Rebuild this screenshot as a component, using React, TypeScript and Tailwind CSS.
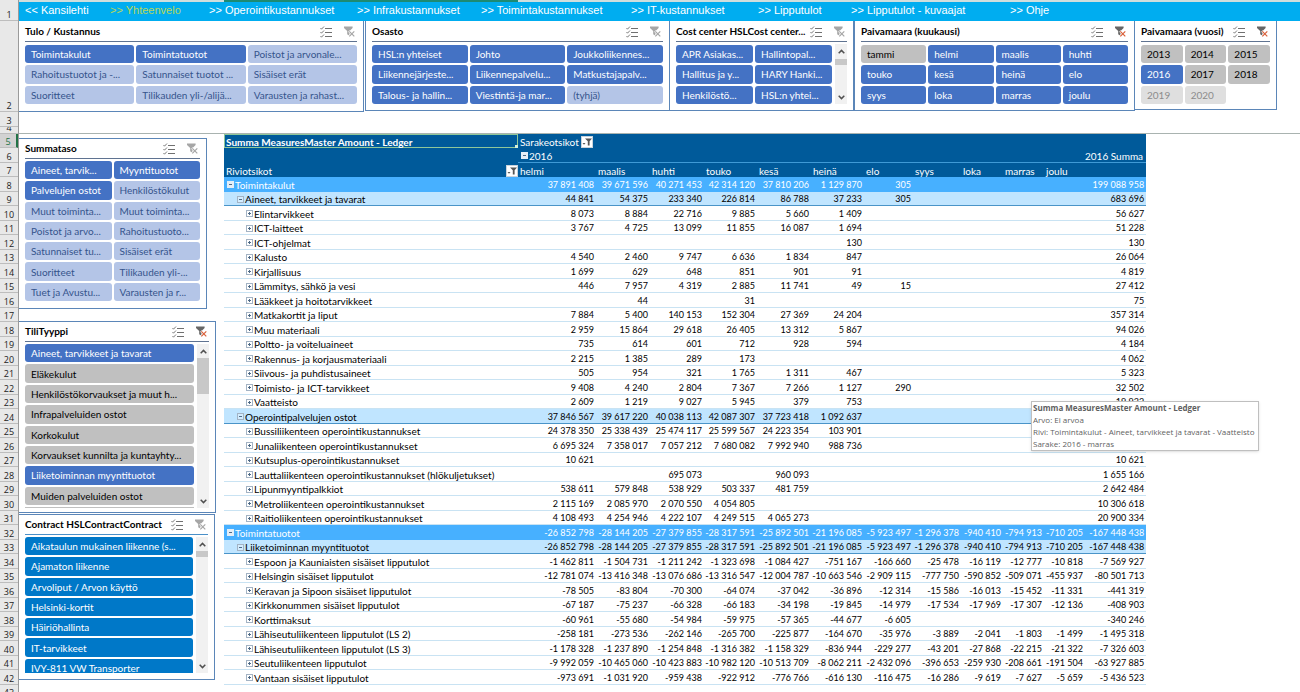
import React from "react";
import clsx from "clsx";

type Tone = "on" | "off" | "gray" | "faded" | "sky";
type Item = { label: string; tone: Tone };

const tones: Record<Tone, string> = {
  on: "bg-[#4472c4] text-white",
  off: "bg-[#b4c5e7] text-[#35548c]",
  gray: "bg-[#c0c0c0] text-black",
  faded: "bg-[#dfdfdf] text-[#8c8c8c]",
  sky: "bg-[#0078c8] text-white",
};

const make = (tone: Tone, ...labels: string[]): Item[] =>
  labels.map((label) => ({ label, tone }));

const links = [
  "<< Kansilehti",
  ">> Yhteenvelo",
  ">> Operointikustannukset",
  ">> Infrakustannukset",
  ">> Toimintakustannukset",
  ">> IT-kustannukset",
  ">> Lipputulot",
  ">> Lipputulot - kuvaajat",
  ">> Ohje",
];

const tulo = [
  ...make("on", "Toimintakulut", "Toimintatuotot"),
  ...make(
    "off",
    "Poistot ja arvonale...",
    "Rahoitustuotot ja -...",
    "Satunnaiset tuotot ...",
    "Sisäiset erät",
    "Suoritteet",
    "Tilikauden yli-/alijä...",
    "Varausten ja rahast..."
  ),
];

const osasto = [
  ...make(
    "on",
    "HSL:n yhteiset",
    "Johto",
    "Joukkoliikennes...",
    "Liikennejärjeste...",
    "Liikennepalvelu...",
    "Matkustajapalv...",
    "Talous- ja hallin...",
    "Viestintä-ja mar..."
  ),
  ...make("off", "(tyhjä)"),
];

const costCenter = make(
  "on",
  "APR Asiakas...",
  "Hallintopal...",
  "Hallitus ja y...",
  "HARY Hanki...",
  "Henkilöstö...",
  "HSL:n yhtei..."
);

const kuukausi = [
  ...make("gray", "tammi"),
  ...make(
    "on",
    "helmi",
    "maalis",
    "huhti",
    "touko",
    "kesä",
    "heinä",
    "elo",
    "syys",
    "loka",
    "marras",
    "joulu"
  ),
];

const vuosi = [
  ...make("gray", "2013", "2014", "2015"),
  ...make("on", "2016"),
  ...make("gray", "2017", "2018"),
  ...make("faded", "2019", "2020"),
];

const summataso = [
  ...make("on", "Aineet, tarvik...", "Myyntituotot", "Palvelujen ostot"),
  ...make(
    "off",
    "Henkilöstökulut",
    "Muut toiminta...",
    "Muut toiminta...",
    "Poistot ja arvo...",
    "Rahoitustuoto...",
    "Satunnaiset tu...",
    "Sisäiset erät",
    "Suoritteet",
    "Tilikauden yli-...",
    "Tuet ja Avustu...",
    "Varausten ja r..."
  ),
];

const tilityyppi = [
  ...make("on", "Aineet, tarvikkeet ja tavarat"),
  ...make(
    "gray",
    "Eläkekulut",
    "Henkilöstökorvaukset ja muut h...",
    "Infrapalveluiden ostot",
    "Korkokulut",
    "Korvaukset kunnilta ja kuntayhty..."
  ),
  ...make("on", "Liiketoiminnan myyntituotot"),
  ...make("gray", "Muiden palveluiden ostot"),
];

const contract = make(
  "sky",
  "Aikataulun mukainen liikenne (s...",
  "Ajamaton liikenne",
  "Arvoliput / Arvon käyttö",
  "Helsinki-kortit",
  "Häiriöhallinta",
  "IT-tarvikkeet",
  "IVY-811 VW Transporter"
);

const months = [
  "helmi",
  "maalis",
  "huhti",
  "touko",
  "kesä",
  "heinä",
  "elo",
  "syys",
  "loka",
  "marras",
  "joulu",
];

// level, label, then one value per month and the 2016 total
const rows: [number, string, string][] = [
  [1, "Toimintakulut", "37 891 408|39 671 596|40 271 453|42 314 120|37 810 206|1 129 870|305|||||199 088 958"],
  [2, "Aineet, tarvikkeet ja tavarat", "44 841|54 375|233 340|226 814|86 788|37 233|305|||||683 696"],
  [3, "Elintarvikkeet", "8 073|8 884|22 716|9 885|5 660|1 409||||||56 627"],
  [3, "ICT-laitteet", "3 767|4 725|13 099|11 855|16 087|1 694||||||51 228"],
  [3, "ICT-ohjelmat", "|||||130||||||130"],
  [3, "Kalusto", "4 540|2 460|9 747|6 636|1 834|847||||||26 064"],
  [3, "Kirjallisuus", "1 699|629|648|851|901|91||||||4 819"],
  [3, "Lämmitys, sähkö ja vesi", "446|7 957|4 319|2 885|11 741|49|15|||||27 412"],
  [3, "Lääkkeet ja hoitotarvikkeet", "|44||31||||||||75"],
  [3, "Matkakortit ja liput", "7 884|5 400|140 153|152 304|27 369|24 204||||||357 314"],
  [3, "Muu materiaali", "2 959|15 864|29 618|26 405|13 312|5 867||||||94 026"],
  [3, "Poltto- ja voiteluaineet", "735|614|601|712|928|594||||||4 184"],
  [3, "Rakennus- ja korjausmateriaali", "2 215|1 385|289|173||||||||4 062"],
  [3, "Siivous- ja puhdistusaineet", "505|954|321|1 765|1 311|467||||||5 323"],
  [3, "Toimisto- ja ICT-tarvikkeet", "9 408|4 240|2 804|7 367|7 266|1 127|290|||||32 502"],
  [3, "Vaatteisto", "2 609|1 219|9 027|5 945|379|753||||||19 932"],
  [2, "Operointipalvelujen ostot", "37 846 567|39 617 220|40 038 113|42 087 307|37 723 418|1 092 637||||||"],
  [3, "Bussiliikenteen operointikustannukset", "24 378 350|25 338 439|25 474 117|25 599 567|24 223 354|103 901||||||"],
  [3, "Junaliikenteen operointikustannukset", "6 695 324|7 358 017|7 057 212|7 680 082|7 992 940|988 736||||||"],
  [3, "Kutsuplus-operointikustannukset", "10 621|||||||||||10 621"],
  [3, "Lauttaliikenteen operointikustannukset (hlökuljetukset)", "||695 073||960 093|||||||1 655 166"],
  [3, "Lipunmyyntipalkkiot", "538 611|579 848|538 929|503 337|481 759|||||||2 642 484"],
  [3, "Metroliikenteen operointikustannukset", "2 115 169|2 085 970|2 070 550|4 054 805||||||||10 306 618"],
  [3, "Raitioliikenteen operointikustannukset", "4 108 493|4 254 946|4 222 107|4 249 515|4 065 273|||||||20 900 334"],
  [1, "Toimintatuotot", "-26 852 798|-28 144 205|-27 379 855|-28 317 591|-25 892 501|-21 196 085|-5 923 497|-1 296 378|-940 410|-794 913|-710 205|-167 448 438"],
  [2, "Liiketoiminnan myyntituotot", "-26 852 798|-28 144 205|-27 379 855|-28 317 591|-25 892 501|-21 196 085|-5 923 497|-1 296 378|-940 410|-794 913|-710 205|-167 448 438"],
  [3, "Espoon ja Kauniaisten sisäiset lipputulot", "-1 462 811|-1 504 731|-1 211 242|-1 323 698|-1 084 427|-751 167|-166 660|-25 478|-16 119|-12 777|-10 818|-7 569 927"],
  [3, "Helsingin sisäiset lipputulot", "-12 781 074|-13 416 348|-13 076 686|-13 316 547|-12 004 787|-10 663 546|-2 909 115|-777 750|-590 852|-509 071|-455 937|-80 501 713"],
  [3, "Keravan ja Sipoon sisäiset lipputulot", "-78 505|-83 804|-70 300|-64 074|-37 042|-36 896|-12 314|-15 586|-16 013|-15 452|-11 331|-441 319"],
  [3, "Kirkkonummen sisäiset lipputulot", "-67 187|-75 237|-66 328|-66 183|-34 198|-19 845|-14 979|-17 534|-17 969|-17 307|-12 136|-408 903"],
  [3, "Korttimaksut", "-60 961|-55 680|-54 984|-59 975|-57 365|-44 677|-6 605|||||-340 246"],
  [3, "Lähiseutuliikenteen lipputulot (LS 2)", "-258 181|-273 536|-262 146|-265 700|-225 877|-164 670|-35 976|-3 889|-2 041|-1 803|-1 499|-1 495 318"],
  [3, "Lähiseutuliikenteen lipputulot (LS 3)", "-1 178 328|-1 237 890|-1 254 848|-1 316 382|-1 158 329|-836 944|-229 277|-43 201|-27 868|-22 215|-21 322|-7 326 603"],
  [3, "Seutuliikenteen lipputulot", "-9 992 059|-10 465 060|-10 423 883|-10 982 120|-10 513 709|-8 062 211|-2 432 096|-396 653|-259 930|-208 661|-191 504|-63 927 885"],
  [3, "Vantaan sisäiset lipputulot", "-973 691|-1 031 920|-959 438|-922 912|-776 766|-616 130|-116 475|-16 286|-9 619|-7 627|-5 659|-5 436 523"],
];

function MultiSelectIcon() {
  return (
    <svg width="12" height="12" viewBox="0 0 12 12" fill="none" stroke="#707070">
      <path d="M5 2.5h7M5 6.5h7M5 10.5h7" />
      <path d="M0.5 2l1 1.2L4 0.5M0.5 6l1 1.2L4 4.5M0.5 10l1 1.2L4 8.5" strokeWidth="0.9" />
    </svg>
  );
}

function ClearFilterIcon({ active }: { active: boolean }) {
  return (
    <svg width="11" height="11" viewBox="0 0 11 11" fill="none">
      <path
        d="M0 0.5h8.6v1.4L5.6 5v5L3.2 8.2V5L0 1.9z"
        fill={active ? "#666666" : "#a6a6a6"}
      />
      <path d="M5 5l5.5 5.5M10.5 5L5 10.5" stroke="#ffffff" strokeWidth="2.4" />
      <path
        d="M5.3 5.3l5 5M10.3 5.3l-5 5"
        stroke={active ? "#d9603a" : "#a6a6a6"}
        strokeWidth="1.2"
      />
    </svg>
  );
}

function Chevron({ up }: { up?: boolean }) {
  return (
    <svg width="7" height="5" viewBox="0 0 7 5" fill="none" stroke="#505050" strokeWidth="1.5">
      <path d={up ? "M0.7 4.2l2.8-2.8 2.8 2.8" : "M0.7 0.8l2.8 2.8 2.8-2.8"} />
    </svg>
  );
}

function Scrollbar({ thumb }: { thumb: string }) {
  return (
    <div className="flex w-3 shrink-0 flex-col bg-[#f1f1f1]">
      <button aria-label="Vieritä ylös" className="flex h-[14px] items-center justify-center">
        <Chevron up />
      </button>
      <div className="flex-1">
        <div className={clsx("bg-[#c8c8c8]", thumb)} />
      </div>
      <button aria-label="Vieritä alas" className="flex h-[14px] items-center justify-center">
        <Chevron />
      </button>
    </div>
  );
}

type SlicerProps = {
  title: string;
  items: Item[];
  cols: string;
  height: string;
  active?: boolean;
  thumb?: string;
  peek?: boolean;
  line?: string;
  className?: string;
};

function Slicer({ title, items, cols, height, active = false, thumb, peek, line, className }: SlicerProps) {
  return (
    <section className={clsx("min-w-0 border-[#5b86b8] bg-white px-1.5", className)}>
      <header
        className={clsx(
          "flex h-5 items-center gap-3 border-b",
          line ?? "border-[#5f7391]"
        )}
      >
        <h2 className="min-w-0 flex-1 whitespace-nowrap text-[10px] font-bold text-black">
          {title}
        </h2>
        <button aria-label="Monivalinta">
          <MultiSelectIcon />
        </button>
        <button aria-label="Tyhjennä suodatin" className="mr-0.5">
          <ClearFilterIcon active={active} />
        </button>
      </header>
      <div className="mt-0.5 flex gap-[3px]">
        <div className="min-w-0 flex-1 overflow-hidden">
          <div className={clsx("grid auto-rows-fr gap-0.5", cols, height)}>
            {items.map((item, i) => (
              <button
                key={i}
                className={clsx(
                  "flex min-w-0 items-center overflow-hidden whitespace-nowrap rounded-[3px] pl-1.5 text-[10px] leading-3",
                  tones[item.tone]
                )}
              >
                {item.label}
              </button>
            ))}
          </div>
          {peek && <div className="mt-0.5 h-px bg-[#c0c0c0]" />}
        </div>
        {thumb && <Scrollbar thumb={thumb} />}
      </div>
    </section>
  );
}

function FilterButton({ label }: { label: string }) {
  return (
    <button
      aria-label={label}
      className="flex h-3 w-3 shrink-0 items-center justify-center border border-[#c9d3dc] bg-white"
    >
      <svg width="10" height="10" viewBox="0 0 10 10">
        <path d="M3 1.5H10L7.6 4.2V8.5H5.8V4.2z" fill="#555555" />
        <path d="M0.5 6h3L2 7.8z" fill="#555555" />
      </svg>
    </button>
  );
}

function Toggle({ level }: { level: number }) {
  return (
    <button aria-label={level === 3 ? "Laajenna" : "Tiivistä"} className="shrink-0">
      <svg width="7" height="7" viewBox="0 0 7 7" fill="none">
        <rect
          x="0.5"
          y="0.5"
          width="6"
          height="6"
          fill={level === 1 ? "#e4eef7" : "#ffffff"}
          fillOpacity={level === 2 ? 0.3 : 1}
          stroke={level === 1 ? "#e4eef7" : "#a3b3c4"}
        />
        <path d={level === 3 ? "M2 3.5h3M3.5 2v3" : "M2 3.5h3"} stroke="#4f6a86" />
      </svg>
    </button>
  );
}

function PivotTable() {
  return (
    <table className="w-full table-fixed border-separate border-spacing-0 whitespace-nowrap text-[10px] leading-3">
      <colgroup>
        <col className="w-[294px]" />
        <col className="w-[78px]" />
        <col className="w-[54px]" />
        <col className="w-[54px]" />
        <col className="w-[53px]" />
        <col className="w-[54px]" />
        <col className="w-[53px]" />
        <col className="w-[49px]" />
        <col className="w-[48px]" />
        <col className="w-[42px]" />
        <col className="w-[41px]" />
        <col className="w-[41px]" />
        <col className="w-[61px]" />
      </colgroup>
      <thead className="bg-[#005a9a] text-left text-white">
        <tr className="h-[14px]">
          <th className="relative p-0 pt-px pl-0.5 font-bold ring-1 ring-inset ring-[#8fc79a]">
            Summa MeasuresMaster Amount - Ledger
            <span className="absolute right-0 bottom-0 h-[3px] w-[3px] bg-[#d5f0d9]" />
          </th>
          <th colSpan={12} className="p-0 pt-px pl-0.5 font-normal">
            <div className="flex items-center gap-0.5">
              Sarakeotsikot
              <FilterButton label="Suodata sarakkeet" />
            </div>
          </th>
        </tr>
        <tr className="h-[15px]">
          <th className="p-0" />
          <th colSpan={11} className="border-b border-[#3f9ad6] p-0 pt-px pl-[3px] font-normal">
            <div className="flex items-center gap-px">
              <Toggle level={1} />
              2016
            </div>
          </th>
          <th className="border-b border-[#3f9ad6] p-0 pt-px pr-1 text-right font-normal">2016 Summa</th>
        </tr>
        <tr className="h-[14px]">
          <th className="p-0 pt-px pl-0.5 font-normal">
            <div className="flex items-center justify-between">
              Riviotsikot
              <FilterButton label="Suodata rivit" />
            </div>
          </th>
          {months.map((m) => (
            <th key={m} className="p-0 pt-px pl-0.5 font-normal">
              {m}
            </th>
          ))}
          <th className="p-0" />
        </tr>
      </thead>
      <tbody>
        {rows.map(([level, label, values], i) => {
          const line = clsx(
            "border-b p-0 pt-px",
            level === 1 && "border-[#47b0ff]",
            level === 2 && "border-[#4a94c8]",
            level === 3 && "border-[#c9e3f3]"
          );
          return (
            <tr
              key={i}
              className={clsx(
                "odd:h-[15px] even:h-[14px]",
                level === 1 && "bg-[#47b0ff] text-white",
                level === 2 && "bg-[#c0e5ff] text-black",
                level === 3 && "text-black"
              )}
            >
              <th scope="row" className={clsx(line, "text-left font-normal")}>
                <div
                  className={clsx(
                    "flex items-center gap-px",
                    level === 1 && "pl-[3px]",
                    level === 2 && "pl-[13px]",
                    level === 3 && "pl-[22px]"
                  )}
                >
                  <Toggle level={level} />
                  {label}
                </div>
              </th>
              {values.split("|").map((v, j) => (
                <td key={j} className={clsx(line, "pr-0.5 text-right text-[9px] leading-3")}>
                  {v}
                </td>
              ))}
            </tr>
          );
        })}
      </tbody>
    </table>
  );
}

function RowNumbers() {
  const cell = "flex shrink-0 items-end justify-center overflow-hidden border-b border-[#bdbdbd]";
  return (
    <div className="flex w-[19px] shrink-0 flex-col border-r border-[#9a9a9a] bg-[#e8e8e8] font-['Open_Sans',sans-serif] text-[9px] leading-[11px] text-[#222222]">
      <div className={clsx(cell, "h-[21px]")}>1</div>
      <div className={clsx(cell, "h-[91px]")}>2</div>
      <div className={clsx(cell, "h-[15px]")}>3</div>
      <div className={clsx(cell, "h-[7px] items-center")}>4</div>
      <div>
        {Array.from({ length: 39 }, (_, i) => (
          <div
            key={i}
            className={clsx(
              cell,
              "odd:h-[14px] even:h-[15px]",
              i === 0 && "border-r-2 border-r-[#217346] bg-[#d2d2d2] text-[#217346]"
            )}
          >
            {i + 5}
          </div>
        ))}
      </div>
    </div>
  );
}

function CellTooltip() {
  return (
    <div
      role="tooltip"
      className="absolute top-[267px] left-[1012px] whitespace-nowrap border border-[#bfbfbf] bg-white pr-1 pl-px font-['Open_Sans',sans-serif] text-[8px] leading-3 text-[#5f5f5f] shadow-sm"
    >
      <p className="font-bold">Summa MeasuresMaster Amount - Ledger</p>
      <p>Arvo: Ei arvoa</p>
      <p>Rivi: Toimintakulut - Aineet, tarvikkeet ja tavarat - Vaatteisto</p>
      <p>Sarake: 2016 - marras</p>
    </div>
  );
}

export default function App() {
  return (
    <div className="flex h-screen overflow-hidden bg-white font-[Lato,sans-serif]">
      <RowNumbers />
      <main className="min-w-0 flex-1">
        <div className="flex h-0.5 bg-[#cfdedd]">
          <div className="ml-[205px] w-[294px] bg-[#1d8a73]" />
        </div>
        <nav className="grid h-[19px] grid-cols-[85fr_99fr_148fr_124fr_150fr_127fr_93fr_159fr_290fr] items-start bg-[#00adf0] pl-1.5 font-['Liberation_Sans',Arial,sans-serif] text-[11px] leading-4 text-white">
          {links.map((link, i) => (
            <a key={link} href="#" className={clsx("whitespace-nowrap", i === 1 && "text-[#b9d65a]")}>
              {link}
            </a>
          ))}
        </nav>

        <div className="grid h-28 grid-cols-[345fr_306fr_184fr_281fr_142fr_23fr] items-start">
          <Slicer
            title="Tulo / Kustannus"
            items={tulo}
            cols="grid-cols-3"
            height="mt-px h-[59px]"
            className="h-[91px] border-r border-b pt-px"
          />
          <Slicer
            title="Osasto"
            items={osasto}
            cols="grid-cols-3"
            height="mt-px h-[59px]"
            className="ml-px h-[90px] border-r border-b border-l pt-px"
          />
          <Slicer
            title="Cost center HSLCost center..."
            items={costCenter}
            cols="grid-cols-2"
            height="mt-px h-[59px]"
            thumb="mt-px h-1.5"
            className="h-[90px] border-r border-b pt-px"
          />
          <Slicer
            title="Paivamaara (kuukausi)"
            items={kuukausi}
            cols="grid-cols-4"
            height="mt-px h-[59px]"
            active
            className="h-[90px] border-r border-b border-l pt-px"
          />
          <Slicer
            title="Paivamaara (vuosi)"
            items={vuosi}
            cols="grid-cols-3"
            height="mt-px h-[59px]"
            active
            className="h-[89px] border-r border-b pt-px"
          />
        </div>

        <div className="relative flex items-start border-t border-[#a9b3b0]">
          <aside className="flex w-[205px] shrink-0 flex-col items-start pt-1">
            <Slicer
              title="Summataso"
              items={summataso}
              cols="grid-cols-2"
              height="h-[140px]"
              className="h-[171px] w-[188px] border-y border-r"
            />
            <Slicer
              title="TiliTyyppi"
              items={tilityyppi}
              cols="grid-cols-1"
              height="h-[161px]"
              active
              thumb="h-9"
              peek
              className="mt-3 h-[192px] w-[197px] border-y border-r"
            />
            <Slicer
              title="Contract HSLContractContract"
              items={contract}
              cols="grid-cols-1"
              height="h-[140px] -mb-1"
              thumb="h-1.5"
              line="border-[#4a90c8]"
              className="mt-px h-[166px] w-[196px] border-y border-r"
            />
          </aside>
          <div className="mr-[154px] min-w-0 flex-1">
            <PivotTable />
          </div>
          <CellTooltip />
        </div>
      </main>
    </div>
  );
}
